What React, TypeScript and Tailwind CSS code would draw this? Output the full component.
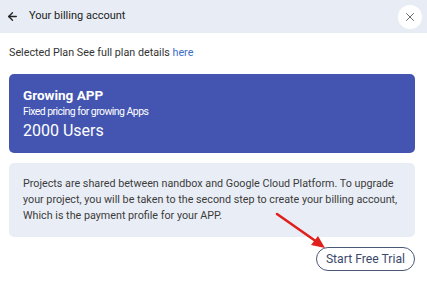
import { ArrowLeft, X } from "lucide-react";

export default function App() {
    return (
        <div className="w-[427px] h-[285px] bg-white flex flex-col font-['Roboto',sans-serif] overflow-hidden">
            <div className="h-[33px] bg-[#e8edf5] flex items-center justify-between pl-[6px] pr-[5px] shrink-0">
                <div className="flex items-center gap-[10px]">
                    <ArrowLeft size={13} strokeWidth={2.4} className="text-[#222]" />
                    <span className="text-[11px] text-[#222]">Your billing account</span>
                </div>
                <div className="w-[24px] h-[24px] rounded-full bg-white flex items-center justify-center">
                    <X size={14} strokeWidth={1.5} className="text-[#555]" />
                </div>
            </div>

            <div className="pl-[9px] pr-[12px] pt-[13px] flex flex-col">
                <p className="text-[10.75px] text-[#333] leading-[14px]">
                    Selected Plan See full plan details <span className="text-[#3a6fc4]">here</span>
                </p>

                <div className="mt-[14px] h-[79px] rounded-[5px] bg-[#4355b0] px-[14px] pt-[13px] text-white">
                    <p className="text-[13.5px] font-bold leading-[17px]">Growing APP</p>
                    <p className="text-[10.5px] leading-[15px] tracking-[-0.55px]">Fixed pricing for growing Apps</p>
                    <p className="text-[16px] leading-[22px] mt-[1px]">2000 Users</p>
                </div>

                <div className="mt-[10px] h-[74px] rounded-[5px] bg-[#e9eef6] px-[14px] pt-[13px]">
                    <p className="text-[10.75px] leading-[16px] text-[#3c3c3c]">
                        Projects are shared between nandbox and Google Cloud Platform. To upgrade your project, you will be taken to the second step to create your billing account, Which is the payment profile for your APP.
                    </p>
                </div>

                <div className="relative flex justify-end mt-[10px]">
                    <svg className="absolute left-[266px] top-[-35px]" width="52" height="38" viewBox="0 0 52 38">
                        <line x1="2" y1="2" x2="42" y2="30" stroke="#e0201c" strokeWidth="2.6" strokeLinecap="round" />
                        <polygon points="50,36 36,33 43,24" fill="#e0201c" />
                    </svg>
                    <button
                        type="button"
                        className="h-[24px] px-[9px] rounded-full border border-[#4a5878] text-[12.2px] text-[#3b4a6b] leading-none"
                    >
                        Start Free Trial
                    </button>
                </div>
            </div>
        </div>
    );
}
